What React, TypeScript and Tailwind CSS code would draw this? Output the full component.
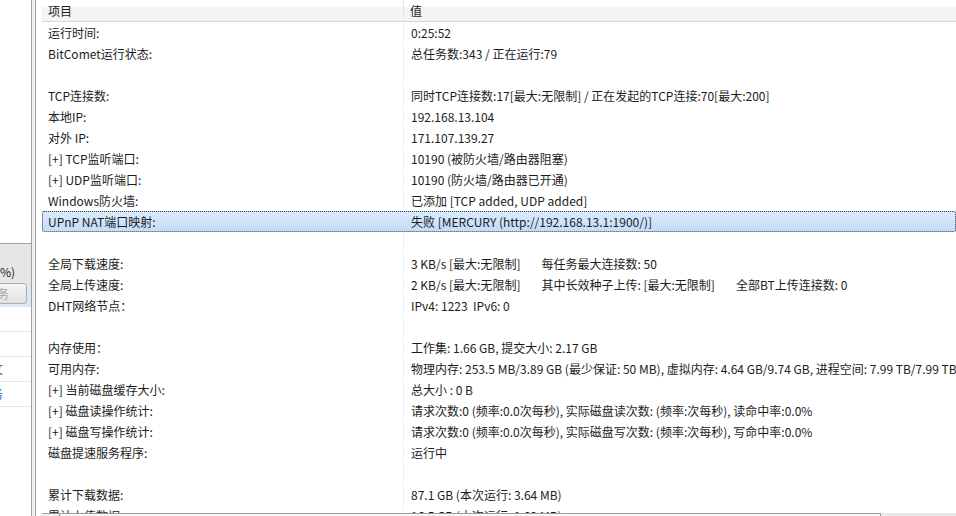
import React from 'react';

type Row = { name: string; value: string | string[]; selected?: boolean };

const rows: Row[] = [
  { name: '运行时间:', value: '0:25:52' },
  { name: 'BitComet运行状态:', value: '总任务数:343 / 正在运行:79' },
  { name: '', value: '' },
  { name: 'TCP连接数:', value: '同时TCP连接数:17[最大:无限制] / 正在发起的TCP连接:70[最大:200]' },
  { name: '本地IP:', value: '192.168.13.104' },
  { name: '对外 IP:', value: '171.107.139.27' },
  { name: '[+] TCP监听端口:', value: '10190 (被防火墙/路由器阻塞)' },
  { name: '[+] UDP监听端口:', value: '10190 (防火墙/路由器已开通)' },
  { name: 'Windows防火墙:', value: '已添加 [TCP added, UDP added]' },
  { name: 'UPnP NAT端口映射:', value: '失败 [MERCURY (http://192.168.13.1:1900/)]', selected: true },
  { name: '', value: '' },
  { name: '全局下载速度:', value: ['3 KB/s [最大:无限制]', '每任务最大连接数: 50'] },
  { name: '全局上传速度:', value: ['2 KB/s [最大:无限制]', '其中长效种子上传: [最大:无限制]', '全部BT上传连接数: 0'] },
  { name: 'DHT网络节点：', value: 'IPv4: 1223  IPv6: 0' },
  { name: '', value: '' },
  { name: '内存使用：', value: '工作集: 1.66 GB, 提交大小: 2.17 GB' },
  { name: '可用内存:', value: '物理内存: 253.5 MB/3.89 GB (最少保证: 50 MB), 虚拟内存: 4.64 GB/9.74 GB, 进程空间: 7.99 TB/7.99 TB' },
  { name: '[+] 当前磁盘缓存大小:', value: '总大小 : 0 B' },
  { name: '[+] 磁盘读操作统计:', value: '请求次数:0 (频率:0.0次每秒), 实际磁盘读次数: (频率:次每秒), 读命中率:0.0%' },
  { name: '[+] 磁盘写操作统计:', value: '请求次数:0 (频率:0.0次每秒), 实际磁盘写次数: (频率:次每秒), 写命中率:0.0%' },
  { name: '磁盘提速服务程序:', value: '运行中' },
  { name: '', value: '' },
  { name: '累计下载数据:', value: '87.1 GB (本次运行: 3.64 MB)' },
  { name: '累计上传数据:', value: '16.5 GB (本次运行: 1.02 MB)' },
];

function SidePanel() {
  return (
    <div className="w-[31px] shrink-0 overflow-hidden bg-white">
      <div className="h-[243px]" />
      {/* box header, clipped */}
      <div className="flex h-[40px] items-end justify-end overflow-hidden border-t border-[#a0a0a0] bg-[#e6e6e6] pr-[16px] pb-[2px]">
        <span className="whitespace-nowrap leading-[18px]">下载 (12.5%)</span>
      </div>
      <div className="flex h-[24px] overflow-hidden bg-[#dfe9f6]">
        <div className="ml-[-57px] flex h-[21px] w-[84px] shrink-0 items-center justify-center rounded-[3px] border border-[#adadad] bg-gradient-to-b from-[#f6f6f6] to-[#e2e2e2] text-[#a3a3a3]">
          开始任务
        </div>
      </div>
      <div className="h-[25px] border-b border-[#e3e9f1]" />
      <div className="h-[25px] border-b border-[#e3e9f1]" />
      <div className="flex h-[25px] items-center justify-end overflow-hidden border-b border-[#e3e9f1] pr-[28px] text-[#0a5bd6]">
        <span className="whitespace-nowrap">帮助文</span>
      </div>
      <div className="flex h-[25px] items-center justify-end overflow-hidden border-b border-[#e3e9f1] pr-[28px] text-[#0a5bd6]">
        <span className="whitespace-nowrap">任务</span>
      </div>
    </div>
  );
}

function Value({ value }: { value: string | string[] }) {
  if (Array.isArray(value)) {
    return (
      <div className="flex gap-[21px] whitespace-pre">
        {value.map((v, i) => (
          <span key={i}>{v}</span>
        ))}
      </div>
    );
  }
  return <span className="whitespace-pre">{value}</span>;
}

export default function App() {
  return (
    <div className="flex h-[516px] w-[956px] overflow-hidden bg-white font-['Noto_Sans_CJK_SC','Noto_Sans',sans-serif] text-[12px] text-[#1c1c1c]">
      <SidePanel />

      {/* splitter */}
      <div className="w-[5px] shrink-0 border-x border-[#a0a0a0] bg-[#f0f0f0]" />

      <div className="flex min-w-0 flex-1 flex-col pl-[6px]">
        {/* column header */}
        <div className="flex h-[22px] shrink-0 border-b border-[#d5d5d5] bg-[linear-gradient(to_bottom,#ffffff_0%,#ffffff_34%,#f3f4f6_36%,#f3f4f6_100%)] leading-[21px]">
          <div className="w-[362px] shrink-0 border-r border-[#e3e5e8] pl-[6px]">项目</div>
          <div className="flex-1 pl-[6px]">值</div>
        </div>

        {/* rows */}
        <div className="min-h-0 flex-1 overflow-hidden">
          {rows.map((r, i) => (
            <div
              key={i}
              className={
                r.selected
                  ? 'flex h-[21px] items-center rounded-[2px] border border-dotted border-[#2e3a4a] bg-gradient-to-b from-[#dcebfc] to-[#c3dcf8] whitespace-nowrap'
                  : 'flex h-[21px] items-center border border-transparent whitespace-nowrap'
              }
            >
              <div
                className={
                  r.selected
                    ? 'flex h-full w-[361px] shrink-0 items-center pl-[5px]'
                    : 'flex h-full w-[361px] shrink-0 items-center border-r border-[#e8eef7] pl-[5px]'
                }
              >
                {r.name}
              </div>
              <div className="flex h-full items-center pl-[7px]">
                <Value value={r.value} />
              </div>
            </div>
          ))}
        </div>

        {/* horizontal scrollbar, mostly off screen */}
        <div className="flex h-[3px] shrink-0">
          <div className="w-[18px] shrink-0 border-t border-r border-[#9c9c9c] bg-[#f2f2f2]" />
          <div className="w-[821px] shrink-0 border-t border-r border-[#9c9c9c] bg-[#f7f7f7]" />
          <div className="flex-1 bg-[#e9e9e9]" />
        </div>
      </div>
    </div>
  );
}
